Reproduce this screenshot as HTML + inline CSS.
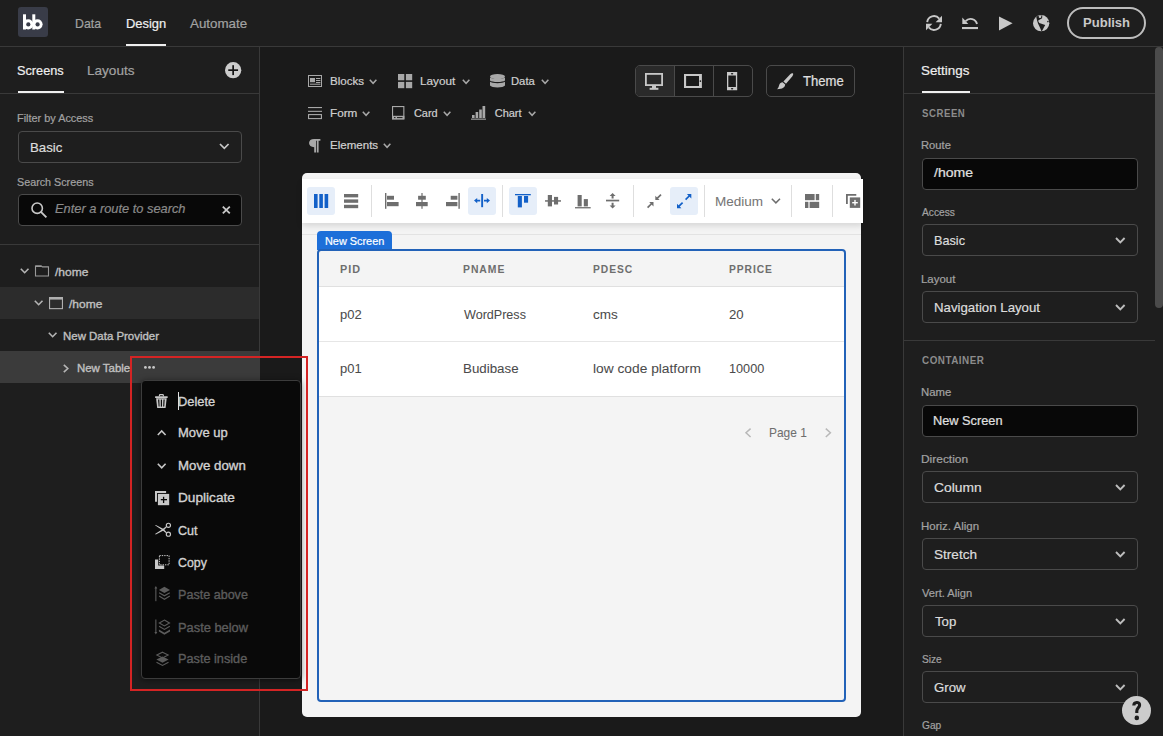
<!DOCTYPE html>
<html><head><meta charset="utf-8"><style>
html,body{margin:0;padding:0;width:1163px;height:736px;overflow:hidden;background:#1a1a1a;}
.a{position:absolute;}
.t{font-family:"Liberation Sans",sans-serif;line-height:1;white-space:nowrap;transform-origin:0 0;}
svg{display:block;overflow:visible;}
</style></head><body>
<div class="a" style="left:0px;top:0px;width:1163px;height:46px;background:#1e1e1e;"></div>
<div class="a" style="left:0px;top:46px;width:1163px;height:1px;background:#393939;"></div>
<div class="a" style="left:0px;top:47px;width:259px;height:689px;background:#1e1e1e;"></div>
<div class="a" style="left:259px;top:47px;width:1px;height:689px;background:#393939;"></div>
<div class="a" style="left:904px;top:47px;width:259px;height:689px;background:#1e1e1e;"></div>
<div class="a" style="left:903px;top:47px;width:1px;height:689px;background:#393939;"></div>
<div class="a" style="left:18px;top:7px;width:30px;height:30px;background:#393c48;border-radius:3px;"></div>
<svg class="a" style="left:18px;top:7px;" width="30" height="30" viewBox="0 0 30 30"><g fill="#fff"><rect x="5" y="7.3" width="3" height="15.2"/><circle cx="10.2" cy="17.3" r="5.1"/><rect x="14.3" y="7.3" width="3" height="15.2"/><circle cx="19.5" cy="17.3" r="5.1"/></g><g fill="#393c48"><circle cx="10.3" cy="17.4" r="2.1"/><circle cx="19.6" cy="17.4" r="2.1"/></g></svg>
<div class="a" style="left:126px;top:44px;width:40px;height:2px;background:#efefef;"></div>
<svg class="a" style="left:926px;top:15px;" width="16" height="16" viewBox="0 0 16 16"><g fill="none" stroke="#c8c8c8" stroke-width="1.9"><path d="M1.2 7.2 A6.8 6.8 0 0 1 13.2 3.6"/><path d="M14.8 8.8 A6.8 6.8 0 0 1 2.8 12.4"/></g><g fill="#c8c8c8"><path d="M16 0.8 L16 7.3 L9.6 7.3 Z"/><path d="M0 15.2 L0 8.7 L6.4 8.7 Z"/></g></svg>
<svg class="a" style="left:962px;top:17px;" width="16" height="13" viewBox="0 0 16 13"><g fill="none" stroke="#c8c8c8" stroke-width="1.9"><path d="M3.6 4.2 A6.6 6.6 0 0 1 15 7"/></g><g fill="#c8c8c8"><path d="M0.3 0.6 L0.3 7 L6.3 7 Z"/><rect x="0" y="10" width="16" height="2.1"/></g></svg>
<svg class="a" style="left:999px;top:15.7px;" width="14" height="15" viewBox="0 0 14 15"><path d="M0 0.4 L13.6 7.3 L0 14.4 Z" fill="#c8c8c8"/></svg>
<svg class="a" style="left:1032.8px;top:14.8px;" width="16.3" height="16.3" viewBox="0 0 16.3 16.3"><circle cx="8.15" cy="8.15" r="8.15" fill="#c8c8c8"/><path d="M3.3 1.9 L5.0 0.7 L9.3 0.5 L9.1 3.3 L5.2 5.6 L5.4 6.6 L6.3 8.0 L12.2 9.9 L9.0 15.9 L8.4 16.0 L6.8 12.2 L5.0 8.4 L4.0 5.2 Z" fill="#1e1e1e"/><ellipse cx="7.0" cy="1.7" rx="1.3" ry="1.2" fill="#c8c8c8"/><circle cx="14.9" cy="6.6" r="0.8" fill="#1e1e1e"/></svg>
<div class="a" style="left:1067px;top:7px;width:79px;height:32px;box-sizing:border-box;border:2px solid #bdbdbd;border-radius:16px;"></div>
<div class="a" style="left:18px;top:91px;width:46px;height:2px;background:#efefef;"></div>
<svg class="a" style="left:224.8px;top:61.9px;" width="16.3" height="16.3" viewBox="0 0 16.3 16.3"><circle cx="8.15" cy="8.15" r="8.15" fill="#cccccc"/><g fill="#141414"><rect x="7.3" y="3.2" width="1.7" height="9.9"/><rect x="3.25" y="7.3" width="9.8" height="1.7"/></g></svg>
<div class="a" style="left:0px;top:93px;width:259px;height:1px;background:#393939;"></div>
<div class="a" style="left:18px;top:131px;width:224px;height:32px;background:#1e1e1e;box-sizing:border-box;border:1px solid #4a4a4a;border-radius:4px;"></div>
<svg class="a" style="left:218.6px;top:143px;" width="10.6" height="7" viewBox="0 0 10.6 7"><path d="M1 1 L5.3 5.3 L9.6 1" fill="none" stroke="#c8c8c8" stroke-width="1.7"/></svg>
<div class="a" style="left:18px;top:194px;width:224px;height:31.5px;background:#080808;box-sizing:border-box;border:1px solid #4a4a4a;border-radius:4px;"></div>
<svg class="a" style="left:31px;top:202.3px;" width="16" height="16" viewBox="0 0 16 16"><circle cx="6.2" cy="6.2" r="5.2" fill="none" stroke="#c8c8c8" stroke-width="1.6"/><path d="M9.9 9.9 L15.4 15.4" stroke="#c8c8c8" stroke-width="1.8"/></svg>
<svg class="a" style="left:221.7px;top:206px;" width="8.6" height="8" viewBox="0 0 8.6 8"><path d="M0.8 0.6 L7.8 7.4 M7.8 0.6 L0.8 7.4" stroke="#c8c8c8" stroke-width="1.8"/></svg>
<div class="a" style="left:0px;top:244px;width:259px;height:1px;background:#393939;"></div>
<svg class="a" style="left:19.5px;top:268.3px;" width="9.3" height="5.8" viewBox="0 0 9.3 5.8"><path d="M0.8 0.8 L4.65 4.7 L8.5 0.8" fill="none" stroke="#b5b5b5" stroke-width="1.6"/></svg>
<svg class="a" style="left:35px;top:264.8px;" width="14" height="11.6" viewBox="0 0 14 11.6"><path d="M0.5 1 L6.2 1 L7.4 1.9 L13.5 1.9 L13.5 11 L0.5 11 Z" fill="none" stroke="#9a9a9a" stroke-width="1.1"/><rect x="0.5" y="0.5" width="6" height="1.5" fill="#9a9a9a"/></svg>
<div class="a" style="left:0px;top:287px;width:259px;height:32px;background:#2c2c2c;"></div>
<svg class="a" style="left:33.5px;top:300.2px;" width="9.3" height="5.8" viewBox="0 0 9.3 5.8"><path d="M0.8 0.8 L4.65 4.7 L8.5 0.8" fill="none" stroke="#b5b5b5" stroke-width="1.6"/></svg>
<svg class="a" style="left:49px;top:297px;" width="14" height="12.2" viewBox="0 0 14 12.2"><rect x="0.55" y="0.55" width="12.9" height="11.1" fill="none" stroke="#b0b0b0" stroke-width="1.1"/><rect x="0" y="0" width="14" height="2.6" fill="#b0b0b0"/></svg>
<svg class="a" style="left:47.7px;top:332.2px;" width="9.3" height="5.8" viewBox="0 0 9.3 5.8"><path d="M0.8 0.8 L4.65 4.7 L8.5 0.8" fill="none" stroke="#b5b5b5" stroke-width="1.6"/></svg>
<div class="a" style="left:0px;top:351px;width:260px;height:32px;background:#3b3b3b;"></div>
<svg class="a" style="left:63.2px;top:363.5px;" width="6" height="9" viewBox="0 0 6 9"><path d="M0.8 0.8 L4.8 4.5 L0.8 8.2" fill="none" stroke="#b5b5b5" stroke-width="1.6"/></svg>
<svg class="a" style="left:143.5px;top:365.8px;" width="11" height="3" viewBox="0 0 11 3"><g fill="#c8c8c8"><circle cx="1.4" cy="1.4" r="1.4"/><circle cx="5.5" cy="1.4" r="1.4"/><circle cx="9.6" cy="1.4" r="1.4"/></g></svg>
<svg class="a" style="left:308px;top:74.7px;" width="14" height="12" viewBox="0 0 14 12"><rect x="0.5" y="0.5" width="13" height="11" fill="none" stroke="#a8a8a8" stroke-width="1"/><rect x="2" y="3" width="5" height="4.2" fill="#a8a8a8"/><g stroke="#a8a8a8" stroke-width="1"><path d="M8 3.5 H12.4 M8 5.5 H12.4 M8 7.5 H12.4 M2 9.2 H12.4"/></g></svg>
<svg class="a" style="left:369px;top:79px;" width="8.2" height="5.2" viewBox="0 0 8.2 5.2"><path d="M0.8 0.8 L4.1 4.3 L7.4 0.8" fill="none" stroke="#a8a8a8" stroke-width="1.5"/></svg>
<svg class="a" style="left:398px;top:74px;" width="14.2" height="14.2" viewBox="0 0 14.2 14.2"><g fill="#a8a8a8"><rect x="0" y="0" width="6.3" height="6.3"/><rect x="7.9" y="0" width="6.3" height="6.3"/><rect x="0" y="7.9" width="6.3" height="6.3"/><rect x="7.9" y="7.9" width="6.3" height="6.3"/></g></svg>
<svg class="a" style="left:461.8px;top:79px;" width="8.2" height="5.2" viewBox="0 0 8.2 5.2"><path d="M0.8 0.8 L4.1 4.3 L7.4 0.8" fill="none" stroke="#a8a8a8" stroke-width="1.5"/></svg>
<svg class="a" style="left:489.5px;top:73.7px;" width="15" height="14.2" viewBox="0 0 15 14.2"><g fill="#a8a8a8"><ellipse cx="7.5" cy="2.6" rx="7.5" ry="2.6"/><path d="M0 3.6 C1.5 5.5 13.5 5.5 15 3.6 L15 6.6 C13.5 8.6 1.5 8.6 0 6.6 Z"/><path d="M0 7.8 C1.5 9.7 13.5 9.7 15 7.8 L15 11.6 C13.5 14.2 1.5 14.2 0 11.6 Z"/></g></svg>
<svg class="a" style="left:541px;top:79px;" width="8.2" height="5.2" viewBox="0 0 8.2 5.2"><path d="M0.8 0.8 L4.1 4.3 L7.4 0.8" fill="none" stroke="#a8a8a8" stroke-width="1.5"/></svg>
<svg class="a" style="left:308px;top:107.2px;" width="14" height="12.2" viewBox="0 0 14 12.2"><g fill="#a8a8a8"><rect x="0" y="0" width="14" height="1.1"/><rect x="0" y="3.8" width="14" height="1.1"/></g><rect x="0.55" y="7.6" width="12.9" height="4" fill="none" stroke="#a8a8a8" stroke-width="1.1"/></svg>
<svg class="a" style="left:362.3px;top:111px;" width="8.2" height="5.2" viewBox="0 0 8.2 5.2"><path d="M0.8 0.8 L4.1 4.3 L7.4 0.8" fill="none" stroke="#a8a8a8" stroke-width="1.5"/></svg>
<svg class="a" style="left:391.7px;top:106.2px;" width="12.4" height="13.4" viewBox="0 0 12.4 13.4"><rect x="0.55" y="0.55" width="11.3" height="12.3" fill="none" stroke="#a8a8a8" stroke-width="1.1"/><rect x="0" y="9.8" width="12.4" height="3.6" fill="#a8a8a8"/><rect x="2" y="11.1" width="1.5" height="1" fill="#1a1a1a"/><rect x="5" y="11.1" width="5.5" height="1" fill="#1a1a1a"/></svg>
<svg class="a" style="left:442.7px;top:111px;" width="8.2" height="5.2" viewBox="0 0 8.2 5.2"><path d="M0.8 0.8 L4.1 4.3 L7.4 0.8" fill="none" stroke="#a8a8a8" stroke-width="1.5"/></svg>
<svg class="a" style="left:471px;top:106.2px;" width="15" height="13.8" viewBox="0 0 15 13.8"><g fill="#a8a8a8"><rect x="1" y="9" width="2.6" height="3"/><rect x="4.6" y="6" width="2.6" height="6"/><rect x="8.2" y="3.5" width="2.6" height="8.5"/><rect x="11.5" y="0" width="2.7" height="12"/><rect x="0" y="12.6" width="15" height="1.1"/></g></svg>
<svg class="a" style="left:528px;top:111px;" width="8.2" height="5.2" viewBox="0 0 8.2 5.2"><path d="M0.8 0.8 L4.1 4.3 L7.4 0.8" fill="none" stroke="#a8a8a8" stroke-width="1.5"/></svg>
<svg class="a" style="left:308.6px;top:138.6px;" width="11.5" height="13.8" viewBox="0 0 11.5 13.8"><g fill="#a8a8a8"><path d="M5 0 L11.4 0 L11.4 1.8 L9.6 1.8 L9.6 13.6 L7.8 13.6 L7.8 1.8 L7 1.8 L7 13.6 L5.2 13.6 L5.2 8.2 C2 8.2 0 6.4 0 4.1 C0 1.6 2 0 5 0 Z"/></g></svg>
<svg class="a" style="left:383px;top:143px;" width="8.2" height="5.2" viewBox="0 0 8.2 5.2"><path d="M0.8 0.8 L4.1 4.3 L7.4 0.8" fill="none" stroke="#a8a8a8" stroke-width="1.5"/></svg>
<div class="a" style="left:635px;top:65px;width:118px;height:32px;box-sizing:border-box;border:1px solid #4a4a4a;border-radius:5px;"></div>
<div class="a" style="left:636px;top:66px;width:38px;height:30px;background:#2a2a2a;border-radius:4px 0 0 4px;"></div>
<div class="a" style="left:674px;top:66px;width:1px;height:30px;background:#4a4a4a;"></div>
<div class="a" style="left:713px;top:66px;width:1px;height:30px;background:#4a4a4a;"></div>
<svg class="a" style="left:644.8px;top:72.9px;" width="18" height="17" viewBox="0 0 18 17"><rect x="0.9" y="0.9" width="16.2" height="11.2" fill="none" stroke="#c8c8c8" stroke-width="1.8"/><rect x="7" y="12.5" width="4" height="2.5" fill="#c8c8c8"/><rect x="4.6" y="14.8" width="8.8" height="2" fill="#c8c8c8"/></svg>
<svg class="a" style="left:684px;top:73.9px;" width="18" height="14.1" viewBox="0 0 18 14.1"><path d="M0 0 H17.9 V14.1 H0 Z M2.1 2.1 V12 H15 V2.1 Z" fill="#c8c8c8" fill-rule="evenodd"/><ellipse cx="16.4" cy="7.05" rx="0.8" ry="0.9" fill="#1a1a1a"/></svg>
<svg class="a" style="left:726.9px;top:71.7px;" width="10.2" height="18.3" viewBox="0 0 10.2 18.3"><path d="M0 0 H10.2 V18.3 H0 Z M1.3 3.5 V15 H8.9 V3.5 Z" fill="#c8c8c8" fill-rule="evenodd"/><ellipse cx="5.1" cy="1.7" rx="1.2" ry="0.7" fill="#1a1a1a"/><ellipse cx="5.1" cy="16.7" rx="1.2" ry="0.7" fill="#1a1a1a"/></svg>
<div class="a" style="left:766px;top:65px;width:89px;height:32px;box-sizing:border-box;border:1px solid #4a4a4a;border-radius:5px;"></div>
<svg class="a" style="left:776.7px;top:72.9px;" width="16.5" height="16.3" viewBox="0 0 16.5 16.3"><g fill="#c8c8c8"><path d="M15.8 0.3 C16.6 0.8 16.2 2.2 15.4 3.2 L9 10.8 L6.4 8.4 L13.2 1.2 C14.2 0.2 15.2 -0.1 15.8 0.3 Z"/><path d="M5.6 9.2 L8.2 11.6 C7.8 14.4 5.8 16.2 0 16.2 C1.6 15 1.6 13.8 2.2 12 C2.8 10.2 4 9.2 5.6 9.2 Z"/></g></svg>
<div class="a" style="left:302px;top:173px;width:559px;height:544px;background:#f4f4f4;border-radius:5px;"></div>
<div class="a" style="left:302px;top:178.6px;width:561px;height:44.1px;background:#ffffff;box-shadow:0 3px 6px rgba(0,0,0,0.12);"></div>
<div class="a" style="left:302px;top:234px;width:559px;height:1px;background:#e3e3e3;"></div>
<div class="a" style="left:307.2px;top:187px;width:27.6px;height:28px;background:#e6eef9;border-radius:3px;"></div>
<svg class="a" style="left:313.8px;top:193.8px;" width="14.2" height="14" viewBox="0 0 14.2 14"><g fill="#1260c8"><rect x="0" y="0" width="3.6" height="14"/><rect x="5.3" y="0" width="3.6" height="14"/><rect x="10.6" y="0" width="3.6" height="14"/></g></svg>
<svg class="a" style="left:344px;top:193.8px;" width="14.2" height="14.2" viewBox="0 0 14.2 14.2"><g fill="#6e6e6e"><rect x="0" y="0" width="14.2" height="3.4"/><rect x="0" y="5.4" width="14.2" height="3.4"/><rect x="0" y="10.8" width="14.2" height="3.4"/></g></svg>
<div class="a" style="left:371px;top:185.4px;width:1px;height:31.2px;background:#dedede;"></div>
<div class="a" style="left:502px;top:185.4px;width:1px;height:31.2px;background:#dedede;"></div>
<div class="a" style="left:633px;top:185.4px;width:1px;height:31.2px;background:#dedede;"></div>
<div class="a" style="left:704px;top:185.4px;width:1px;height:31.2px;background:#dedede;"></div>
<div class="a" style="left:791px;top:185.4px;width:1px;height:31.2px;background:#dedede;"></div>
<div class="a" style="left:832px;top:185.4px;width:1px;height:31.2px;background:#dedede;"></div>
<svg class="a" style="left:384.6px;top:193px;" width="14" height="15.8" viewBox="0 0 14 15.8"><g fill="#6e6e6e"><rect x="0" y="0" width="1.4" height="15.8"/><rect x="2.0" y="2.8" width="7.0" height="3.9"/><rect x="2.0" y="9" width="11.6" height="4.2"/></g></svg>
<svg class="a" style="left:415.6px;top:193px;" width="12" height="15.8" viewBox="0 0 12 15.8"><g fill="#6e6e6e"><rect x="5.4" y="0" width="1.2" height="15.8"/><rect x="2.1" y="2.8" width="7.7" height="3.9"/><rect x="0" y="9" width="11.7" height="4.2"/></g></svg>
<svg class="a" style="left:445.5px;top:193px;" width="14" height="15.8" viewBox="0 0 14 15.8"><g fill="#6e6e6e"><rect x="12.4" y="0" width="1.4" height="15.8"/><rect x="4.7" y="2.8" width="6.7" height="3.9"/><rect x="0" y="9" width="11.4" height="4.2"/></g></svg>
<div class="a" style="left:468px;top:187px;width:28px;height:28px;background:#e6eef9;border-radius:3px;"></div>
<svg class="a" style="left:473.9px;top:194px;" width="16" height="13.2" viewBox="0 0 16 13.2"><g fill="#1260c8"><rect x="7.2" y="0" width="1.9" height="13.2"/><path d="M0 6.6 L3.2 3.9 L3.2 5.7 L6.2 5.7 L6.2 7.5 L3.2 7.5 L3.2 9.3 Z"/><path d="M16 6.6 L12.8 3.9 L12.8 5.7 L10 5.7 L10 7.5 L12.8 7.5 L12.8 9.3 Z"/></g></svg>
<div class="a" style="left:509.1px;top:187px;width:27.7px;height:28px;background:#e6eef9;border-radius:3px;"></div>
<svg class="a" style="left:515.1px;top:193.8px;" width="15.8" height="13.4" viewBox="0 0 15.8 13.4"><g fill="#1260c8"><rect x="0" y="0" width="15.8" height="1.3"/><rect x="2.8" y="2" width="4.1" height="11.4"/><rect x="9" y="2" width="4.1" height="6.7"/></g></svg>
<svg class="a" style="left:545px;top:194.8px;" width="16" height="11.4" viewBox="0 0 16 11.4"><g fill="#6e6e6e"><rect x="0" y="5.2" width="16" height="1.5"/><rect x="2.8" y="0" width="4.2" height="11.4"/><rect x="9" y="1.9" width="4.1" height="7.6"/></g></svg>
<svg class="a" style="left:575.2px;top:194.8px;" width="15.7" height="13.4" viewBox="0 0 15.7 13.4"><g fill="#6e6e6e"><rect x="0" y="12.1" width="15.7" height="1.3"/><rect x="2.6" y="0" width="4.1" height="11.4"/><rect x="8.8" y="4.1" width="4.1" height="7.3"/></g></svg>
<svg class="a" style="left:605.9px;top:193.3px;" width="13.2" height="15.6" viewBox="0 0 13.2 15.6"><g fill="#6e6e6e"><rect x="0" y="6.7" width="13.2" height="1.7"/><path d="M6.6 0 L9.6 3 L7.6 3 L7.6 5.6 L5.6 5.6 L5.6 3 L3.6 3 Z"/><path d="M6.6 15.6 L9.6 12.6 L7.6 12.6 L7.6 9.8 L5.6 9.8 L5.6 12.6 L3.6 12.6 Z"/></g></svg>
<svg class="a" style="left:646.7px;top:194px;" width="14.6" height="14.2" viewBox="0 0 14.6 14.2"><g stroke="#6e6e6e" stroke-width="1.7" fill="none"><path d="M14 0.6 L9.4 5.2"/><path d="M0.6 13.6 L5.2 9"/></g><g fill="#6e6e6e"><path d="M8.3 6.1 L8.3 1.8 L12.6 6.1 Z"/><path d="M6.5 8.1 L6.5 12.4 L2.2 8.1 Z"/></g></svg>
<div class="a" style="left:670.1px;top:187px;width:27.7px;height:28px;background:#e6eef9;border-radius:3px;"></div>
<svg class="a" style="left:676.8px;top:194px;" width="14.4" height="14.2" viewBox="0 0 14.4 14.2"><g stroke="#1260c8" stroke-width="1.7" fill="none"><path d="M13.2 1 L8.6 5.6"/><path d="M1 13.2 L5.6 8.6"/></g><g fill="#1260c8"><path d="M14.3 0 L14.3 4.4 L9.9 0 Z"/><path d="M0 14.2 L0 9.8 L4.4 14.2 Z"/></g></svg>
<svg class="a" style="left:771.2px;top:198.3px;" width="9.8" height="5.8" viewBox="0 0 9.8 5.8"><path d="M0.8 0.8 L4.9 4.9 L9 0.8" fill="none" stroke="#6e6e6e" stroke-width="1.5"/></svg>
<svg class="a" style="left:805px;top:194px;" width="14.2" height="14" viewBox="0 0 14.2 14"><g fill="#6e6e6e"><rect x="0" y="0" width="9.6" height="6.2"/><rect x="10.8" y="0" width="3.4" height="6.2"/><rect x="0" y="7.8" width="3.4" height="6.2"/><rect x="4.6" y="7.8" width="9.6" height="6.2"/></g></svg>
<svg class="a" style="left:846px;top:194.1px;" width="14.2" height="13.9" viewBox="0 0 14.2 13.9"><path d="M0 0 H10.3 V1.8 H1.8 V10 H0 Z" fill="#6e6e6e"/><rect x="3" y="2.6" width="11.2" height="11.3" fill="#fff"/><rect x="3.8" y="3.4" width="10.4" height="10.5" fill="#6e6e6e"/><g fill="#fff"><rect x="6.2" y="8.0" width="5.6" height="1.4"/><rect x="8.3" y="5.9" width="1.4" height="5.6"/></g></svg>
<div class="a" style="left:317.4px;top:231.2px;width:74.5px;height:18.5px;background:#1d6fd9;border-radius:4px 4px 0 0;"></div>
<div class="a" style="left:317px;top:249px;width:529px;height:453px;box-sizing:border-box;border:2px solid #2262b8;border-radius:4px;"></div>
<div class="a" style="left:319px;top:286px;width:525px;height:1px;background:#e0e0e0;"></div>
<div class="a" style="left:319px;top:287px;width:525px;height:54px;background:#ffffff;"></div>
<div class="a" style="left:319px;top:341px;width:525px;height:1px;background:#e6e6e6;"></div>
<div class="a" style="left:319px;top:342px;width:525px;height:54px;background:#ffffff;"></div>
<div class="a" style="left:319px;top:396px;width:525px;height:1px;background:#e0e0e0;"></div>
<svg class="a" style="left:745px;top:428.2px;" width="6.4" height="9.6" viewBox="0 0 6.4 9.6"><path d="M5.6 0.6 L1 4.8 L5.6 9" fill="none" stroke="#b8b8b8" stroke-width="1.5"/></svg>
<svg class="a" style="left:824.8px;top:428.2px;" width="6.4" height="9.6" viewBox="0 0 6.4 9.6"><path d="M0.8 0.6 L5.4 4.8 L0.8 9" fill="none" stroke="#b8b8b8" stroke-width="1.5"/></svg>
<div class="a" style="left:141px;top:380px;width:159.7px;height:299.2px;background:#090909;box-sizing:border-box;border:1px solid #3c3c3c;border-radius:4px;box-shadow:0 1px 6px rgba(0,0,0,0.5);"></div>
<svg class="a" style="left:155.2px;top:394px;" width="12.8" height="14" viewBox="0 0 12.8 14"><g fill="#c8c8c8"><rect x="0" y="2.3" width="12.8" height="1.6" rx="0.6"/><path d="M1.1 4.2 L11.7 4.2 L10.6 14 L2.2 14 Z"/></g><path d="M4.2 2.4 L4.8 0.6 L8 0.6 L8.6 2.4" fill="none" stroke="#c8c8c8" stroke-width="1.2"/><g fill="#090909"><path d="M3.1 5.6 L4.3 5.6 L4.6 12.6 L3.6 12.6 Z"/><rect x="5.8" y="5.6" width="1.2" height="7"/><path d="M8.5 5.6 L9.7 5.6 L9.2 12.6 L8.2 12.6 Z"/></g></svg>
<div class="a" style="left:178px;top:392px;width:1px;height:18px;background:#e0e0e0;"></div>
<svg class="a" style="left:157.4px;top:430px;" width="9.4" height="5.8" viewBox="0 0 9.4 5.8"><path d="M0.8 5 L4.7 1 L8.6 5" fill="none" stroke="#c8c8c8" stroke-width="1.6"/></svg>
<svg class="a" style="left:157.4px;top:463px;" width="9.4" height="5.8" viewBox="0 0 9.4 5.8"><path d="M0.8 0.8 L4.7 4.8 L8.6 0.8" fill="none" stroke="#c8c8c8" stroke-width="1.6"/></svg>
<svg class="a" style="left:154.9px;top:490.9px;" width="14.3" height="14.3" viewBox="0 0 14.3 14.3"><path d="M0 0 H11.1 V2.1 H2.2 V10.7 H0 Z" fill="#c8c8c8"/><rect x="2.1" y="2.1" width="12.2" height="12.2" fill="#090909"/><rect x="2.9" y="2.9" width="11.3" height="11.3" fill="#c8c8c8"/><g fill="#090909"><rect x="5.8" y="8.0" width="6.2" height="1.3"/><rect x="7.95" y="5.8" width="1.3" height="6.2"/></g></svg>
<svg class="a" style="left:154.5px;top:523.2px;" width="15.8" height="13.6" viewBox="0 0 15.8 13.6"><g fill="none" stroke="#c8c8c8" stroke-width="1.15"><circle cx="13.4" cy="2.3" r="2.1"/><circle cx="13.4" cy="11.2" r="2.1"/></g><g fill="#c8c8c8"><path d="M0 2.3 L0.8 2.0 L8.6 6.1 L11.9 9.5 L11.2 10.3 L7.4 7.3 Z"/><path d="M0 11.1 L0.8 11.4 L8.6 7.4 L11.9 4.0 L11.2 3.2 L7.4 6.2 Z"/></g></svg>
<svg class="a" style="left:154.8px;top:554.8px;" width="14.7" height="14" viewBox="0 0 14.7 14"><g fill="#c8c8c8"><path d="M0 4.6 L3.2 4.6 L3.2 10.6 L9.2 10.6 L9.2 14 L0 14 Z"/></g><rect x="4.4" y="0.6" width="9.7" height="9.2" fill="none" stroke="#c8c8c8" stroke-width="1" stroke-dasharray="1.4 1"/></svg>
<svg class="a" style="left:154.8px;top:586px;" width="15.3" height="15.5" viewBox="0 0 15.3 15.5"><g fill="#5c5c5c"><path d="M9.4 0.7 L15 3.9 L9.4 7.1 L3.9 3.9 Z"/><rect x="0.3" y="1.8" width="1.1" height="13.4"/><path d="M0.85 0 L2.3 2.5 L-0.6 2.5 Z"/></g><g fill="none" stroke="#5c5c5c" stroke-width="1.2"><path d="M4.1 6.7 L9.4 9.8 L14.8 6.7"/><path d="M4.1 10.1 L9.4 13.2 L14.8 10.1"/></g></svg>
<svg class="a" style="left:154.8px;top:618.5px;" width="15.3" height="16" viewBox="0 0 15.3 16"><g fill="#5c5c5c"><rect x="0.3" y="0.5" width="1.1" height="13.2"/><path d="M0.85 15.5 L2.3 13 L-0.6 13 Z"/><path d="M3.9 10.6 L9.4 13.7 L15 10.6 L15 12.6 L9.4 15.8 L3.9 12.6 Z"/></g><g fill="none" stroke="#5c5c5c" stroke-width="1.1"><path d="M9.4 1.1 L14.5 4.0 L9.4 6.9 L4.3 4.0 Z"/><path d="M4.1 7.3 L9.4 10.4 L14.8 7.3"/></g></svg>
<svg class="a" style="left:154.8px;top:651px;" width="15.3" height="15.5" viewBox="0 0 15.3 15.5"><g fill="none" stroke="#5c5c5c" stroke-width="1.1"><path d="M7.5 1.2 L13.2 4.1 L7.5 7 L1.8 4.1 Z"/><path d="M1.5 11.3 L7.5 14.5 L13.5 11.3"/></g><path d="M7.5 5.6 L13.6 8.6 L7.5 11.7 L1.4 8.6 Z" fill="#5c5c5c"/></svg>
<div class="a" style="left:130px;top:356px;width:178px;height:335px;box-sizing:border-box;border:2px solid #d42424;"></div>
<div class="a" style="left:922px;top:91px;width:47.5px;height:2px;background:#efefef;"></div>
<div class="a" style="left:904px;top:93px;width:251px;height:1px;background:#393939;"></div>
<div class="a" style="left:1155px;top:47px;width:8px;height:261px;background:#4b4b4b;border-radius:4px;"></div>
<div class="a" style="left:922px;top:158px;width:216px;height:31.5px;background:#080808;box-sizing:border-box;border:1px solid #4a4a4a;border-radius:4px;"></div>
<div class="a" style="left:922px;top:224.2px;width:216px;height:32px;background:#1e1e1e;box-sizing:border-box;border:1px solid #4a4a4a;border-radius:4px;"></div>
<svg class="a" style="left:1115px;top:236.79999999999998px;" width="10.6" height="7" viewBox="0 0 10.6 7"><path d="M1 1 L5.3 5.3 L9.6 1" fill="none" stroke="#bdbdbd" stroke-width="1.9"/></svg>
<div class="a" style="left:922px;top:291px;width:216px;height:32px;background:#1e1e1e;box-sizing:border-box;border:1px solid #4a4a4a;border-radius:4px;"></div>
<svg class="a" style="left:1115px;top:303.6px;" width="10.6" height="7" viewBox="0 0 10.6 7"><path d="M1 1 L5.3 5.3 L9.6 1" fill="none" stroke="#bdbdbd" stroke-width="1.9"/></svg>
<div class="a" style="left:904px;top:340px;width:251px;height:1px;background:#393939;"></div>
<div class="a" style="left:922px;top:405px;width:216px;height:32px;background:#080808;box-sizing:border-box;border:1px solid #4a4a4a;border-radius:4px;"></div>
<div class="a" style="left:922px;top:471.2px;width:216px;height:32px;background:#1e1e1e;box-sizing:border-box;border:1px solid #4a4a4a;border-radius:4px;"></div>
<svg class="a" style="left:1115px;top:483.8px;" width="10.6" height="7" viewBox="0 0 10.6 7"><path d="M1 1 L5.3 5.3 L9.6 1" fill="none" stroke="#bdbdbd" stroke-width="1.9"/></svg>
<div class="a" style="left:922px;top:538px;width:216px;height:32px;background:#1e1e1e;box-sizing:border-box;border:1px solid #4a4a4a;border-radius:4px;"></div>
<svg class="a" style="left:1115px;top:550.6px;" width="10.6" height="7" viewBox="0 0 10.6 7"><path d="M1 1 L5.3 5.3 L9.6 1" fill="none" stroke="#bdbdbd" stroke-width="1.9"/></svg>
<div class="a" style="left:922px;top:605.3px;width:216px;height:32px;background:#1e1e1e;box-sizing:border-box;border:1px solid #4a4a4a;border-radius:4px;"></div>
<svg class="a" style="left:1115px;top:617.9px;" width="10.6" height="7" viewBox="0 0 10.6 7"><path d="M1 1 L5.3 5.3 L9.6 1" fill="none" stroke="#bdbdbd" stroke-width="1.9"/></svg>
<div class="a" style="left:922px;top:671.4px;width:216px;height:32px;background:#1e1e1e;box-sizing:border-box;border:1px solid #4a4a4a;border-radius:4px;"></div>
<svg class="a" style="left:1115px;top:684.0px;" width="10.6" height="7" viewBox="0 0 10.6 7"><path d="M1 1 L5.3 5.3 L9.6 1" fill="none" stroke="#bdbdbd" stroke-width="1.9"/></svg>
<svg class="a" style="left:1122.4px;top:695.5px;" width="29" height="29" viewBox="0 0 29 29"><circle cx="14.5" cy="14.5" r="14.5" fill="#cccccc"/><path d="M11.8 9.4 C11.8 5.9 17.6 5.3 17.6 8.9 C17.6 11.6 14.8 12.1 14.8 15.2 L14.8 16.9" fill="none" stroke="#1e1e1e" stroke-width="3.1"/><circle cx="14.8" cy="21.9" r="2.3" fill="#1e1e1e"/></svg>
<div class="a t" style="left:74.86px;top:16.92px;font-size:13.04px;color:#a2a2a2;-webkit-text-stroke:0.2px currentColor;transform:scaleX(0.9444);">Data</div>
<div class="a t" style="left:125.51px;top:16.92px;font-size:13.04px;color:#efefef;-webkit-text-stroke:0.2px currentColor;transform:scaleX(0.9923);">Design</div>
<div class="a t" style="left:189.8px;top:16.92px;font-size:13.04px;color:#a2a2a2;-webkit-text-stroke:0.2px currentColor;transform:scaleX(1.0255);">Automate</div>
<div class="a t" style="left:1082.53px;top:16.04px;font-size:13.48px;color:#c8c8c8;font-weight:700;transform:scaleX(0.9681);">Publish</div>
<div class="a t" style="left:16.95px;top:64.17px;font-size:13.33px;color:#efefef;-webkit-text-stroke:0.2px currentColor;transform:scaleX(0.9542);">Screens</div>
<div class="a t" style="left:86.88px;top:64.17px;font-size:13.33px;color:#a2a2a2;-webkit-text-stroke:0.2px currentColor;transform:scaleX(1.0178);">Layouts</div>
<div class="a t" style="left:16.84px;top:113.85px;font-size:10.29px;color:#a2a2a2;-webkit-text-stroke:0.2px currentColor;transform:scaleX(1.0592);">Filter by Access</div>
<div class="a t" style="left:29.58px;top:141.32px;font-size:13.04px;color:#dcdcdc;-webkit-text-stroke:0.2px currentColor;transform:scaleX(1.0167);">Basic</div>
<div class="a t" style="left:17.02px;top:176.84px;font-size:11.01px;color:#a2a2a2;-webkit-text-stroke:0.2px currentColor;transform:scaleX(0.9779);">Search Screens</div>
<div class="a t" style="left:54.7px;top:203.6px;font-size:11.88px;color:#8a8a8a;-webkit-text-stroke:0.2px currentColor;font-style:italic;transform:scaleX(1.0802);">Enter a route to search</div>
<div class="a t" style="left:55.2px;top:266.81px;font-size:11.16px;color:#c0c0c0;-webkit-text-stroke:0.35px currentColor;transform:scaleX(1.0742);">/home</div>
<div class="a t" style="left:69.4px;top:298.81px;font-size:11.16px;color:#c0c0c0;-webkit-text-stroke:0.35px currentColor;transform:scaleX(1.0742);">/home</div>
<div class="a t" style="left:62.67px;top:330.81px;font-size:11.16px;color:#c0c0c0;-webkit-text-stroke:0.35px currentColor;transform:scaleX(1.0258);">New Data Provider</div>
<div class="a t" style="left:76.97px;top:362.81px;font-size:11.16px;color:#c0c0c0;-webkit-text-stroke:0.35px currentColor;transform:scaleX(1.0255);">New Table</div>
<div class="a t" style="left:330.15px;top:75.64px;font-size:11.01px;color:#d0d0d0;-webkit-text-stroke:0.2px currentColor;transform:scaleX(1.0484);">Blocks</div>
<div class="a t" style="left:419.83px;top:75.64px;font-size:11.01px;color:#d0d0d0;-webkit-text-stroke:0.2px currentColor;transform:scaleX(1.0688);">Layout</div>
<div class="a t" style="left:511.18px;top:75.64px;font-size:11.01px;color:#d0d0d0;-webkit-text-stroke:0.2px currentColor;transform:scaleX(1.0227);">Data</div>
<div class="a t" style="left:330.13px;top:107.64px;font-size:11.01px;color:#d0d0d0;-webkit-text-stroke:0.2px currentColor;transform:scaleX(1.0667);">Form</div>
<div class="a t" style="left:414.2px;top:107.64px;font-size:11.01px;color:#d0d0d0;-webkit-text-stroke:0.2px currentColor;transform:scaleX(0.9913);">Card</div>
<div class="a t" style="left:494.7px;top:107.64px;font-size:11.01px;color:#d0d0d0;-webkit-text-stroke:0.2px currentColor;transform:scaleX(1.0000);">Chart</div>
<div class="a t" style="left:330.12px;top:139.99px;font-size:10.72px;color:#d0d0d0;-webkit-text-stroke:0.2px currentColor;transform:scaleX(1.0767);">Elements</div>
<div class="a t" style="left:803.0px;top:73.75px;font-size:14.06px;color:#e0e0e0;-webkit-text-stroke:0.2px currentColor;transform:scaleX(0.9302);">Theme</div>
<div class="a t" style="left:714.9px;top:194.94px;font-size:13.48px;color:#767676;-webkit-text-stroke:0.05px currentColor;transform:scaleX(1.0043);">Medium</div>
<div class="a t" style="left:324.57px;top:235.91px;font-size:10.58px;color:#ffffff;-webkit-text-stroke:0.2px currentColor;transform:scaleX(1.0286);">New Screen</div>
<div class="a t" style="left:339.71px;top:264.06px;font-size:10.87px;color:#6e6e6e;font-weight:700;letter-spacing:1px;transform:scaleX(0.9947);">PID</div>
<div class="a t" style="left:463.24px;top:264.06px;font-size:10.87px;color:#6e6e6e;font-weight:700;letter-spacing:1px;transform:scaleX(0.9571);">PNAME</div>
<div class="a t" style="left:592.65px;top:264.06px;font-size:10.87px;color:#6e6e6e;font-weight:700;letter-spacing:1px;transform:scaleX(0.9450);">PDESC</div>
<div class="a t" style="left:729.05px;top:264.06px;font-size:10.87px;color:#6e6e6e;font-weight:700;letter-spacing:1px;transform:scaleX(0.9455);">PPRICE</div>
<div class="a t" style="left:339.67px;top:308.78px;font-size:12.61px;color:#4b4b4b;-webkit-text-stroke:0.05px currentColor;transform:scaleX(1.0300);">p02</div>
<div class="a t" style="left:464.2px;top:308.78px;font-size:12.61px;color:#4b4b4b;-webkit-text-stroke:0.05px currentColor;transform:scaleX(0.9968);">WordPress</div>
<div class="a t" style="left:592.53px;top:308.78px;font-size:12.61px;color:#4b4b4b;-webkit-text-stroke:0.05px currentColor;transform:scaleX(1.0727);">cms</div>
<div class="a t" style="left:728.95px;top:308.78px;font-size:12.61px;color:#4b4b4b;-webkit-text-stroke:0.05px currentColor;transform:scaleX(1.0462);">20</div>
<div class="a t" style="left:339.67px;top:363.18px;font-size:12.61px;color:#4b4b4b;-webkit-text-stroke:0.05px currentColor;transform:scaleX(1.0300);">p01</div>
<div class="a t" style="left:463.14px;top:363.18px;font-size:12.61px;color:#4b4b4b;-webkit-text-stroke:0.05px currentColor;transform:scaleX(1.0569);">Budibase</div>
<div class="a t" style="left:592.51px;top:363.18px;font-size:12.61px;color:#4b4b4b;-webkit-text-stroke:0.05px currentColor;transform:scaleX(1.0918);">low code platform</div>
<div class="a t" style="left:728.99px;top:363.18px;font-size:12.61px;color:#4b4b4b;-webkit-text-stroke:0.05px currentColor;transform:scaleX(1.0059);">10000</div>
<div class="a t" style="left:768.51px;top:427.37px;font-size:12.03px;color:#6e6e6e;-webkit-text-stroke:0.05px currentColor;transform:scaleX(0.9946);">Page 1</div>
<div class="a t" style="left:178.48px;top:395.58px;font-size:12.61px;color:#d2d2d2;-webkit-text-stroke:0.35px currentColor;transform:scaleX(1.0171);">Delete</div>
<div class="a t" style="left:177.57px;top:427.18px;font-size:12.61px;color:#d2d2d2;-webkit-text-stroke:0.35px currentColor;transform:scaleX(1.0298);">Move up</div>
<div class="a t" style="left:177.55px;top:460.18px;font-size:12.61px;color:#d2d2d2;-webkit-text-stroke:0.35px currentColor;transform:scaleX(1.0508);">Move down</div>
<div class="a t" style="left:178.22px;top:492.28px;font-size:12.61px;color:#d2d2d2;-webkit-text-stroke:0.35px currentColor;transform:scaleX(1.0824);">Duplicate</div>
<div class="a t" style="left:178.0px;top:525.38px;font-size:12.61px;color:#d2d2d2;-webkit-text-stroke:0.35px currentColor;transform:scaleX(0.9950);">Cut</div>
<div class="a t" style="left:178.4px;top:557.18px;font-size:12.61px;color:#d2d2d2;-webkit-text-stroke:0.35px currentColor;transform:scaleX(0.9800);">Copy</div>
<div class="a t" style="left:178.4px;top:589.38px;font-size:12.61px;color:#5c5c5c;-webkit-text-stroke:0.35px currentColor;transform:scaleX(0.9971);">Paste above</div>
<div class="a t" style="left:178.38px;top:621.58px;font-size:12.61px;color:#5c5c5c;-webkit-text-stroke:0.35px currentColor;transform:scaleX(1.0191);">Paste below</div>
<div class="a t" style="left:178.39px;top:653.18px;font-size:12.61px;color:#5c5c5c;-webkit-text-stroke:0.35px currentColor;transform:scaleX(1.0074);">Paste inside</div>
<div class="a t" style="left:920.8px;top:64.07px;font-size:13.33px;color:#efefef;-webkit-text-stroke:0.2px currentColor;transform:scaleX(1.0043);">Settings</div>
<div class="a t" style="left:921.8px;top:107.89px;font-size:10.72px;color:#8c8c8c;font-weight:700;letter-spacing:0.6px;transform:scaleX(0.8979);">SCREEN</div>
<div class="a t" style="left:920.93px;top:140.73px;font-size:10.43px;color:#a2a2a2;-webkit-text-stroke:0.2px currentColor;transform:scaleX(1.0741);">Route</div>
<div class="a t" style="left:933.5px;top:166.91px;font-size:12.46px;color:#e0e0e0;-webkit-text-stroke:0.2px currentColor;transform:scaleX(1.1294);">/home</div>
<div class="a t" style="left:922.0px;top:207.73px;font-size:10.43px;color:#a2a2a2;-webkit-text-stroke:0.2px currentColor;transform:scaleX(0.9788);">Access</div>
<div class="a t" style="left:933.98px;top:234.91px;font-size:12.46px;color:#dcdcdc;-webkit-text-stroke:0.2px currentColor;transform:scaleX(1.0172);">Basic</div>
<div class="a t" style="left:920.9px;top:274.53px;font-size:10.43px;color:#a2a2a2;-webkit-text-stroke:0.2px currentColor;transform:scaleX(1.0968);">Layout</div>
<div class="a t" style="left:933.94px;top:301.71px;font-size:12.46px;color:#dcdcdc;-webkit-text-stroke:0.2px currentColor;transform:scaleX(1.0636);">Navigation Layout</div>
<div class="a t" style="left:922.0px;top:354.67px;font-size:11.45px;color:#8c8c8c;font-weight:700;letter-spacing:0.6px;transform:scaleX(0.8611);">CONTAINER</div>
<div class="a t" style="left:920.93px;top:387.11px;font-size:10.58px;color:#a2a2a2;-webkit-text-stroke:0.2px currentColor;transform:scaleX(1.0741);">Name</div>
<div class="a t" style="left:933.14px;top:414.57px;font-size:12.03px;color:#e0e0e0;-webkit-text-stroke:0.2px currentColor;transform:scaleX(1.0625);">New Screen</div>
<div class="a t" style="left:920.86px;top:454.73px;font-size:10.43px;color:#a2a2a2;-webkit-text-stroke:0.2px currentColor;transform:scaleX(1.1450);">Direction</div>
<div class="a t" style="left:933.89px;top:481.91px;font-size:12.46px;color:#dcdcdc;-webkit-text-stroke:0.2px currentColor;transform:scaleX(1.1098);">Column</div>
<div class="a t" style="left:920.9px;top:521.53px;font-size:10.43px;color:#a2a2a2;-webkit-text-stroke:0.2px currentColor;transform:scaleX(1.1020);">Horiz. Align</div>
<div class="a t" style="left:933.91px;top:548.71px;font-size:12.46px;color:#dcdcdc;-webkit-text-stroke:0.2px currentColor;transform:scaleX(1.0895);">Stretch</div>
<div class="a t" style="left:922.0px;top:588.83px;font-size:10.43px;color:#a2a2a2;-webkit-text-stroke:0.2px currentColor;transform:scaleX(1.0681);">Vert. Align</div>
<div class="a t" style="left:935.0px;top:616.01px;font-size:12.46px;color:#dcdcdc;-webkit-text-stroke:0.2px currentColor;transform:scaleX(1.0600);">Top</div>
<div class="a t" style="left:922.0px;top:654.93px;font-size:10.43px;color:#a2a2a2;-webkit-text-stroke:0.2px currentColor;transform:scaleX(0.9750);">Size</div>
<div class="a t" style="left:933.94px;top:682.11px;font-size:12.46px;color:#dcdcdc;-webkit-text-stroke:0.2px currentColor;transform:scaleX(1.0586);">Grow</div>
<div class="a t" style="left:922.0px;top:721.33px;font-size:10.43px;color:#a2a2a2;-webkit-text-stroke:0.2px currentColor;transform:scaleX(0.9750);">Gap</div>
</body></html>
